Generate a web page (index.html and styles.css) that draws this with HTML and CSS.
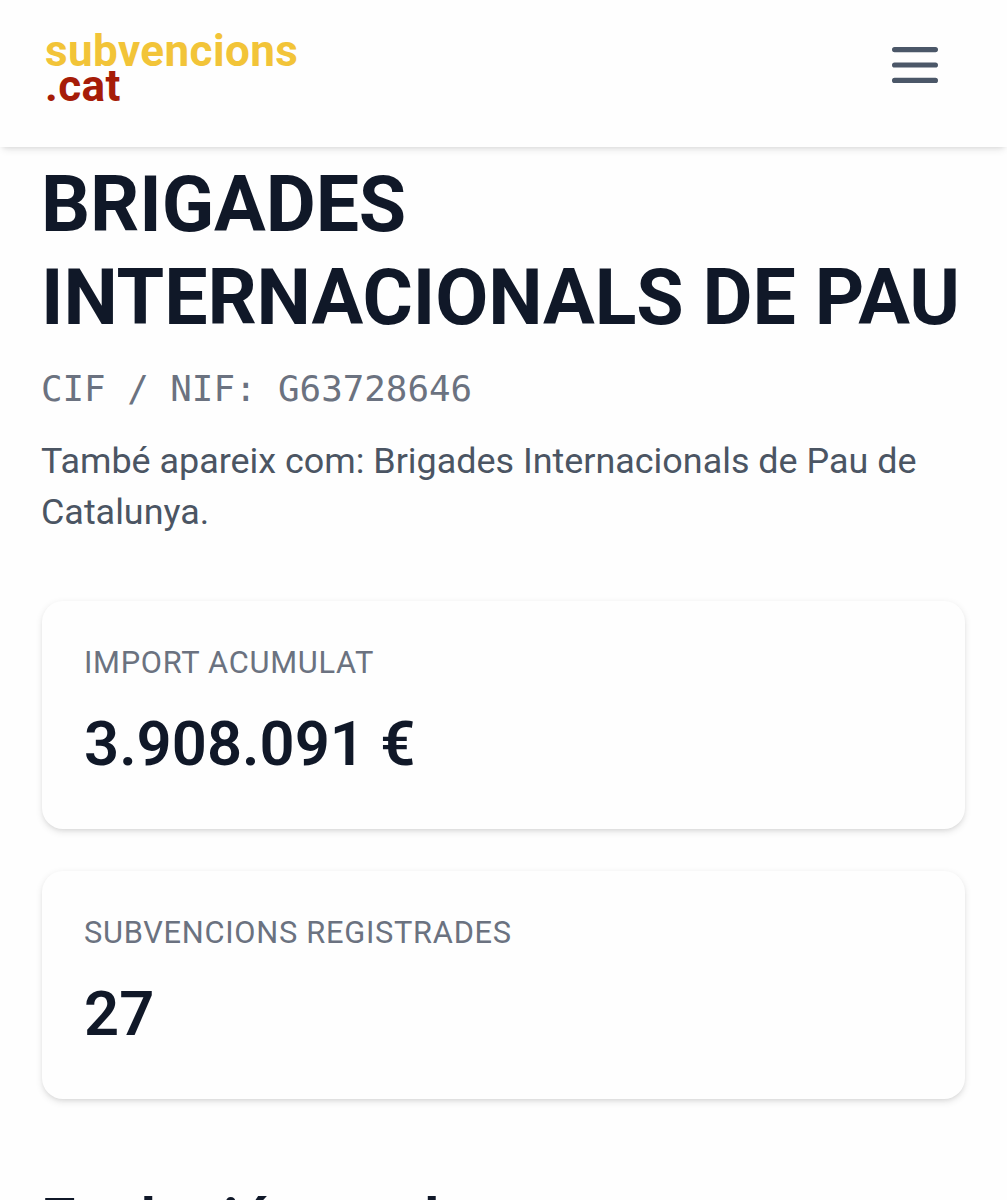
FILE: index.html
```html
<!DOCTYPE html>
<html lang="ca">
	<head>
		<meta charset="utf-8">
		<meta name="viewport" content="width=device-width,initial-scale=1">
		<title>Brigades Internacionals de Pau - subvencions.cat</title>
		<link rel="stylesheet" href="styles.css">
	</head>
	<body>
		<header class="site-header">
			<a class="logo" href="#">
				<span class="logo-name">subvencions</span>
				<span class="logo-tld">.cat</span>
			</a>
			<button class="menu-btn" type="button" aria-label="Menú">
				<svg width="46" height="36" viewBox="0 0 46 36" fill="none" stroke="currentColor" stroke-width="5.2" stroke-linecap="round">
					<path d="M2.6 2.6h40.8M2.6 18h40.8M2.6 33.4h40.8"/>
				</svg>
			</button>
		</header>
		<main class="content">
			<h1>BRIGADES INTERNACIONALS DE PAU</h1>
			<p class="nif">CIF / NIF: G63728646</p>
			<p class="alias">També apareix com: Brigades Internacionals de Pau de Catalunya.</p>
			<div class="stats">
				<div class="card">
					<p class="card-label">IMPORT ACUMULAT</p>
					<p class="card-value">3.908.091 €</p>
				</div>
				<div class="card">
					<p class="card-label">SUBVENCIONS REGISTRADES</p>
					<p class="card-value">27</p>
				</div>
			</div>
			<h2>Evolució anual</h2>
		</main>
	</body>
</html>
```
FILE: styles.css
```css
* {
	box-sizing: border-box;
}
html {
	overflow: hidden;
}
body {
	margin: 0;
	height: 1200px;
	overflow: hidden;
	background: #fefefe;
	color: #101828;
	font-family: Roboto, sans-serif;
}
h1, h2, p {
	margin: 0;
}
.site-header {
	display: flex;
	justify-content: space-between;
	align-items: flex-start;
	height: 147px;
	padding: 34px 69px 0 45px;
	background: #fefefe;
	box-shadow: 0 5px 8px -3px rgba(0, 0, 0, .11), 0 2px 5px -2px rgba(0, 0, 0, .09);
}
.logo {
	display: flex;
	flex-direction: column;
	font-size: 44px;
	font-weight: 700;
	line-height: 35px;
	letter-spacing: .4px;
	text-decoration: none;
}
.logo-name {
	color: #f2c438;
}
.logo-tld {
	color: #a61c08;
}
.menu-btn {
	margin-top: 13px;
	padding: 0;
	border: 0;
	background: none;
	color: #4b5768;
}
.menu-btn svg {
	display: block;
}
.content {
	padding: 12px 41px 0;
}
h1 {
	margin-right: -10px;
	font-size: 77px;
	font-weight: 700;
	line-height: 92.5px;
	letter-spacing: -.1px;
}
.nif {
	margin-top: 20px;
	color: #6b7280;
	font-family: "DejaVu Sans Mono", monospace;
	font-size: 35.8px;
	line-height: 50px;
}
.alias {
	margin-top: 22px;
	color: #4b5563;
	font-size: 35.9px;
	line-height: 51px;
}
.stats {
	display: grid;
	gap: 42px;
	margin: 63px 1px 0;
}
.card {
	height: 228px;
	padding: 41px 42px;
	border-radius: 21px;
	background: #fefefe;
	box-shadow: 0 2.6px 7px rgba(0, 0, 0, .1), 0 2.6px 5px -2.6px rgba(0, 0, 0, .1);
}
.card-label {
	color: #6b7280;
	font-size: 30.8px;
	line-height: 41px;
	letter-spacing: .72px;
}
.card-value {
	margin-top: 20px;
	font-size: 61.5px;
	font-weight: 600;
	line-height: 82px;
}
h2 {
	margin-top: 86px;
	font-size: 61.6px;
	font-weight: 600;
	line-height: 72px;
}
```
